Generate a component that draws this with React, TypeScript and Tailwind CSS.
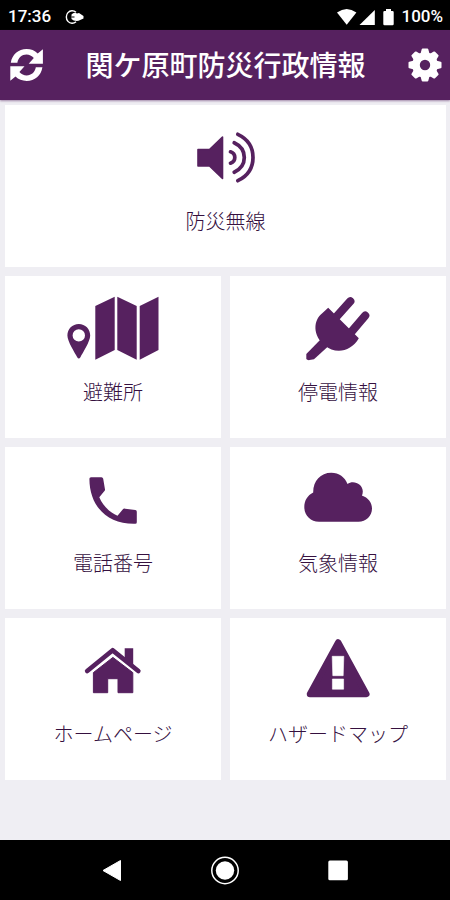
import type { ReactNode } from "react";

const PURPLE = "#56215f";

function SpeakerIcon() {
  return (
    <svg width="100" height="70" viewBox="175.5 125 100 70">
      <path d="M197.5 149.5H209L222 137V178.500L209 166H197.500Z" fill={PURPLE} stroke={PURPLE} strokeWidth="1.600" strokeLinejoin="round" />
      <g fill="none" stroke={PURPLE} strokeWidth="3.700" strokeLinecap="round">
        <path d="M230 151.800Q234.300 153.200 234.300 157.500T230 163.200" />
        <path d="M233.700 142.800Q243.800 147.500 243.800 157.500T233.700 172.200" />
        <path d="M237.300 134.300Q252.500 141.500 252.500 157.500T237.300 180.700" />
      </g>
    </svg>
  );
}

function ShelterIcon() {
  return (
    <svg width="100" height="70" viewBox="63 296 100 70" fill={PURPLE}>
      <path d="M95.300 306L114.700 296.700V350L95.300 359.700ZM117.300 296.700L136.700 306V359.700L117.300 350ZM139.700 306L158.500 296.700V350L139.700 359.700Z" />
      <path fillRule="evenodd" d="M78.800 324C72.300 324 67.400 329 67.400 335.500C67.400 341.500 75 353 77.200 357.200Q78.800 359.600 80.400 357.200C82.600 353 90.200 341.500 90.200 335.500C90.200 329 85.300 324 78.800 324ZM78.800 329.200A6.200 6.200 0 1 1 78.800 341.600A6.200 6.200 0 1 1 78.800 329.200Z" />
    </svg>
  );
}

function PlugIcon() {
  return (
    <svg width="100" height="70" viewBox="288 296 100 70" fill={PURPLE}>
      <path d="M334 319.500L350.300 301.300M350 333.500L365.200 315.600" stroke={PURPLE} strokeWidth="8.200" strokeLinecap="round" />
      <path d="M322 338L306.300 354V359Q307 360.300 309.500 360.100L314 359.200L328 346.500Z" />
      <path d="M328.200 307.800L358.800 338.300C351 352 335 354.500 324.800 345.200C312.500 336 313 320 322.500 313Z" />
    </svg>
  );
}

function PhoneIcon() {
  return (
    <svg width="100" height="70" viewBox="63 467 100 70">
      <path
        d="M91 477.200H101.500Q102.900 477.200 103.200 478.700L105 489.500Q105.200 490.800 103.800 491.700L99.300 497.200C103 506 110 512.500 117.500 515.800L122.700 509.400Q123.700 508.300 125.200 508.700L135.300 510Q136.800 510.200 136.800 511.700V522.300Q136.800 523.800 135.300 523.800C108 524.500 89.500 507 89.400 478.700Q89.400 477.200 91 477.200Z"
        fill={PURPLE}
      />
    </svg>
  );
}

function CloudIcon() {
  return (
    <svg width="100" height="70" viewBox="288 467 100 70" fill={PURPLE}>
      <path d="M319 521.700C310.500 521.700 304.300 515.500 304.300 507C304.300 500.500 307.500 495.500 313.200 492.500C313 481 320.500 472.700 331.300 472.700C339 472.700 344.800 477 347.500 484C353 479.800 362.800 483.500 362.800 491.500Q362.800 493.500 361.900 495.500C368 497.500 372 502.500 372 508.500C372 516 366 521.700 358.500 521.700Z" />
    </svg>
  );
}

function HouseIcon() {
  return (
    <svg width="100" height="70" viewBox="63 638 100 70">
      <path d="M87.200 671L112.700 650.300L138.300 671" fill="none" stroke={PURPLE} strokeWidth="4.700" strokeLinecap="round" strokeLinejoin="round" />
      <path d="M124.700 648.300H133.200V667L124.700 660Z" fill={PURPLE} />
      <path d="M93.400 672.600L112.900 657.400L132.800 672.600V692.700H118V678.700H107.700V692.700H93.400Z" fill={PURPLE} stroke={PURPLE} strokeWidth="1" strokeLinejoin="round" />
    </svg>
  );
}

function HazardIcon() {
  return (
    <svg width="100" height="70" viewBox="288 638 100 70">
      <path d="M338.200 642.500L366.300 694H310Z" fill={PURPLE} stroke={PURPLE} strokeWidth="6.500" strokeLinejoin="round" />
      <path d="M332.200 656.300H343.800L343.200 675.700H332.800ZM332.400 679H343.600V689.200H332.400Z" fill="white" stroke="white" strokeWidth="0.600" strokeLinejoin="round" />
    </svg>
  );
}

function RefreshIcon() {
  return (
    <svg className="shrink-0" width="36" height="36" viewBox="8 47 36 36" fill="white">
      <path d="M10.800 62.800C12 54.500 18.500 49 26.500 49C31 49 34.700 50.500 37.700 53.400L42.900 49.200V63.700H28.700L33.800 58C31.800 55.800 29.300 54.600 26.500 54.600C21.800 54.600 18.100 58 17.400 62.800Z" />
      <path d="M42.400 67.200C41.200 75.500 34.700 81 26.700 81C22.200 81 18.500 79.500 15.500 76.600L10.300 80.800V66.300H24.500L19.400 72C21.400 74.200 23.900 75.400 26.700 75.400C31.400 75.400 35.100 72 35.800 67.200Z" />
    </svg>
  );
}

function GearIcon() {
  return (
    <svg className="shrink-0" width="36" height="36" viewBox="-18 -18 36 36">
      <g fill="white">
        {[0, 45, 90, 135, 180, 225, 270, 315].map((angle) => (
          <path key={angle} d="M-4.800 -10L-3.300 -15.700Q-3.100 -16.500 -2.300 -16.500H2.300Q3.100 -16.500 3.300 -15.700L4.800 -10Z" transform={`rotate(${angle})`} />
        ))}
      </g>
      <circle r="9" fill="none" stroke="white" strokeWidth="7.600" />
    </svg>
  );
}

function StatusBar() {
  return (
    <div className="flex h-[30px] items-center bg-black pl-2 pr-[7px] pt-[3px] font-[Roboto,sans-serif] text-[17px] leading-none font-medium text-white">
      <span>17:36</span>
      <svg className="ml-[14px]" width="20" height="18" viewBox="0 0 20 18">
        <path d="M11 4.300A5.800 6.300 0 1 0 11 13.700" fill="none" stroke="white" strokeWidth="1.400" />
        <path d="M6.500 6.500Q9 3.800 12 5.500L14 5L18.500 8V10.500L13.500 12.800Q9 13.500 6.500 11Z" fill="white" />
        <path d="M6.500 9H9.500" stroke="black" strokeWidth="1" />
      </svg>
      <svg className="ml-auto mr-[6px]" width="58" height="18" viewBox="338 6 58 18" fill="white">
        <path d="M338 10.500Q347.700 3.500 357.400 10.500L347.700 22.700Z" />
        <path d="M375.800 8V23H360.500Z" />
        <path d="M387 7H392V9H393.500Q394.700 9 394.700 10.200V22Q394.700 23.200 393.500 23.200H385.500Q384.300 23.200 384.300 22V10.200Q384.300 9 385.500 9H387Z" />
      </svg>
      <span>100%</span>
    </div>
  );
}

function Tile({ icon, label, wide = false }: { icon: ReactNode; label: string; wide?: boolean }) {
  return (
    <button className={`flex h-[162px] flex-col items-center bg-white pt-5 ${wide ? "col-span-2" : ""}`}>
      {icon}
      <span className="mt-[11px] text-[20px] leading-[30px] font-light whitespace-nowrap text-[#35103f]">{label}</span>
    </button>
  );
}

export default function App() {
  return (
    <div className="flex h-[900px] w-[450px] flex-col overflow-hidden bg-[#efeef3] font-['Noto_Sans_CJK_JP',sans-serif]">
      <StatusBar />
      <header className="flex h-[70px] items-center justify-between bg-[#56215f] pl-2 pr-[7px] shadow-[0_1px_2px_#56215f80]">
        <RefreshIcon />
        <h1 className="pb-[2px] text-[28px] leading-[40px] font-medium whitespace-nowrap text-white">関ケ原町防災行政情報</h1>
        <GearIcon />
      </header>
      <main className="grid flex-1 grid-cols-[216px_216px] content-start gap-[9px] pt-[5px] pl-[5px]">
        <Tile wide icon={<SpeakerIcon />} label="防災無線" />
        <Tile icon={<ShelterIcon />} label="避難所" />
        <Tile icon={<PlugIcon />} label="停電情報" />
        <Tile icon={<PhoneIcon />} label="電話番号" />
        <Tile icon={<CloudIcon />} label="気象情報" />
        <Tile icon={<HouseIcon />} label="ホームページ" />
        <Tile icon={<HazardIcon />} label="ハザードマップ" />
      </main>
      <nav className="flex h-[60px] items-center justify-center gap-[83px] bg-black">
        <svg width="30" height="30" viewBox="97 855 30 30">
          <path d="M103 870.500L120.500 860.500V880.500Z" fill="white" stroke="white" strokeWidth="1" strokeLinejoin="round" />
        </svg>
        <svg width="30" height="30" viewBox="0 0 30 30">
          <circle cx="15" cy="15.500" r="9.200" fill="white" />
          <circle cx="15" cy="15.500" r="13.200" fill="none" stroke="white" strokeWidth="1.500" />
        </svg>
        <svg width="30" height="30" viewBox="0 0 30 30">
          <rect x="5.300" y="5.600" width="19.600" height="19.600" rx="1.500" fill="white" />
        </svg>
      </nav>
    </div>
  );
}
